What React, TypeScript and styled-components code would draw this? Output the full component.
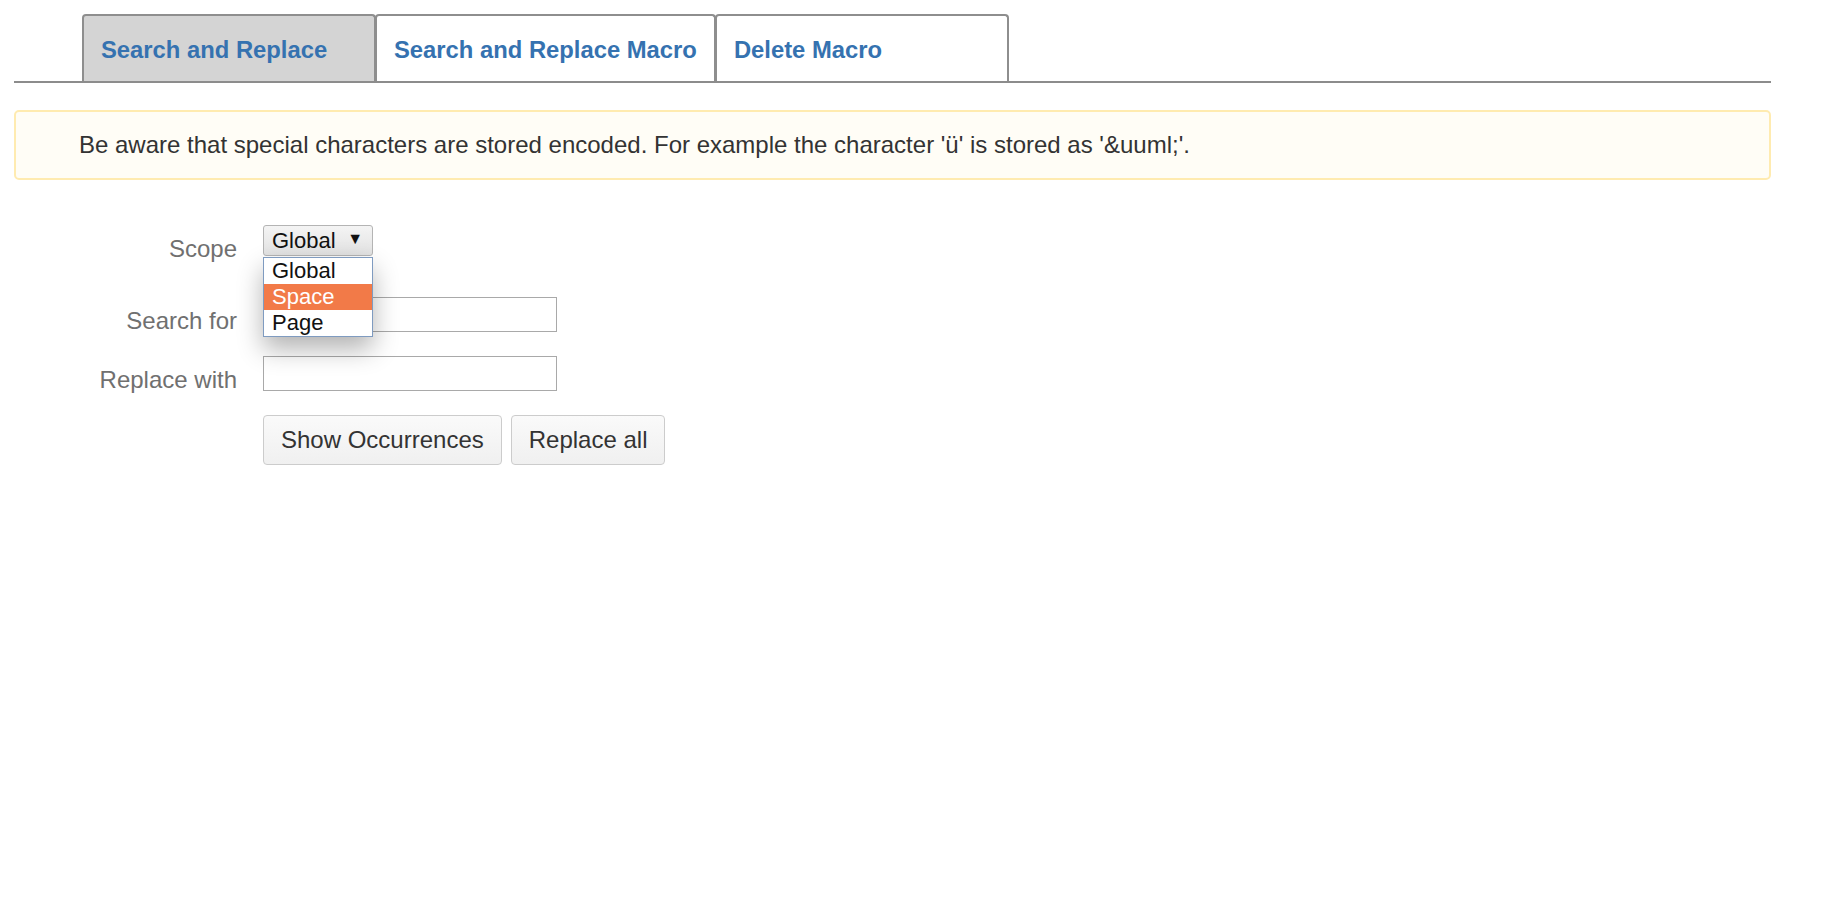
import styled, { createGlobalStyle } from "styled-components";

const GlobalStyle = createGlobalStyle`
    html, body {
        margin: 0;
        padding: 0;
        background: #ffffff;
    }
    body {
        font-family: "Liberation Sans", Arial, sans-serif;
        color: #333333;
    }
`;

const Page = styled.div`
    padding: 14px 69px 0 14px;
`;

const TabBar = styled.div`
    display: flex;
    padding-left: 68px;
    border-bottom: 2px solid #8c8c8c;
`;

const Tab = styled.div<{ $active?: boolean }>`
    box-sizing: border-box;
    display: flex;
    align-items: center;
    height: 67px;
    min-width: 294px;
    padding: 3px 17px 0;
    margin-left: -1px;
    border: 2px solid #8e8e8e;
    border-bottom: none;
    border-radius: 4px 4px 0 0;
    background: ${(p) => (p.$active ? "#d4d4d4" : "#ffffff")};
    color: #3572b0;
    font-size: 23.8px;
    font-weight: 700;
    white-space: nowrap;
    cursor: pointer;
    &:first-child {
        margin-left: 0;
    }
`;

const Alert = styled.div`
    box-sizing: border-box;
    display: flex;
    align-items: center;
    height: 70px;
    margin-top: 27px;
    padding-left: 63px;
    border: 2px solid #ffebb0;
    border-radius: 5px;
    background: #fffdf6;
    font-size: 24px;
    color: #333333;
`;

const Form = styled.div`
    display: grid;
    grid-template-columns: 223px auto;
    column-gap: 26px;
    row-gap: 24px;
    margin-top: 45px;
    justify-content: start;
`;

const Label = styled.div`
    text-align: right;
    padding-top: 12px;
    font-size: 24px;
    line-height: 23px;
    color: #707070;
`;

const ScopeCell = styled.div`
    position: relative;
    height: 48px;
`;

const SelectBox = styled.div`
    box-sizing: border-box;
    display: flex;
    align-items: center;
    justify-content: space-between;
    width: 110px;
    height: 31px;
    padding: 0 9px 0 8px;
    border: 1px solid #b4b4b4;
    border-radius: 3px;
    background: linear-gradient(#f4f4f4, #e2e2e2);
    font-size: 22px;
    color: #111111;
`;

const Caret = styled.span`
    font-size: 16px;
    color: #111111;
    margin-bottom: 3px;
`;

const OptionList = styled.div`
    position: absolute;
    top: 32px;
    left: 0;
    z-index: 2;
    box-sizing: border-box;
    width: 110px;
    border: 1px solid #7f9bc0;
    background: #ffffff;
    box-shadow: 0 12px 26px rgba(0, 0, 0, 0.3);
`;

const Option = styled.div<{ $selected?: boolean }>`
    height: 26px;
    padding-left: 8px;
    font-size: 22px;
    line-height: 26px;
    color: ${(p) => (p.$selected ? "#ffffff" : "#111111")};
    background: ${(p) => (p.$selected ? "#f27a48" : "transparent")};
`;

const TextInput = styled.input`
    box-sizing: border-box;
    width: 294px;
    height: 35px;
    border: 1px solid #a9a9a9;
    padding: 0 6px;
    font-family: inherit;
    font-size: 22px;
    outline: none;
`;

const ButtonRow = styled.div`
    display: flex;
    gap: 9px;
`;

const Button = styled.button`
    box-sizing: border-box;
    height: 50px;
    padding: 0 17px;
    border: 1px solid #cccccc;
    border-radius: 4px;
    background: linear-gradient(#fafafa, #f0f0f0);
    font-family: inherit;
    font-size: 24px;
    color: #333333;
    cursor: pointer;
`;

const Spacer = styled.div``;

export default function App() {
    const tabs = ["Search and Replace", "Search and Replace Macro", "Delete Macro"];
    const scopes = ["Global", "Space", "Page"];

    return (
        <>
            <GlobalStyle />
            <Page>
                <TabBar>
                    {tabs.map((t, i) => (
                        <Tab key={t} $active={i === 0}>{t}</Tab>
                    ))}
                </TabBar>
                <Alert>
                    Be aware that special characters are stored encoded. For example the character 'ü' is stored as '&amp;uuml;'.
                </Alert>
                <Form>
                    <Label>Scope</Label>
                    <ScopeCell>
                        <SelectBox>
                            Global
                            <Caret>▼</Caret>
                        </SelectBox>
                        <OptionList>
                            {scopes.map((s) => (
                                <Option key={s} $selected={s === "Space"}>{s}</Option>
                            ))}
                        </OptionList>
                    </ScopeCell>
                    <Label>Search for</Label>
                    <TextInput type="text" />
                    <Label>Replace with</Label>
                    <TextInput type="text" />
                    <Spacer />
                    <ButtonRow>
                        <Button>Show Occurrences</Button>
                        <Button>Replace all</Button>
                    </ButtonRow>
                </Form>
            </Page>
        </>
    );
}
